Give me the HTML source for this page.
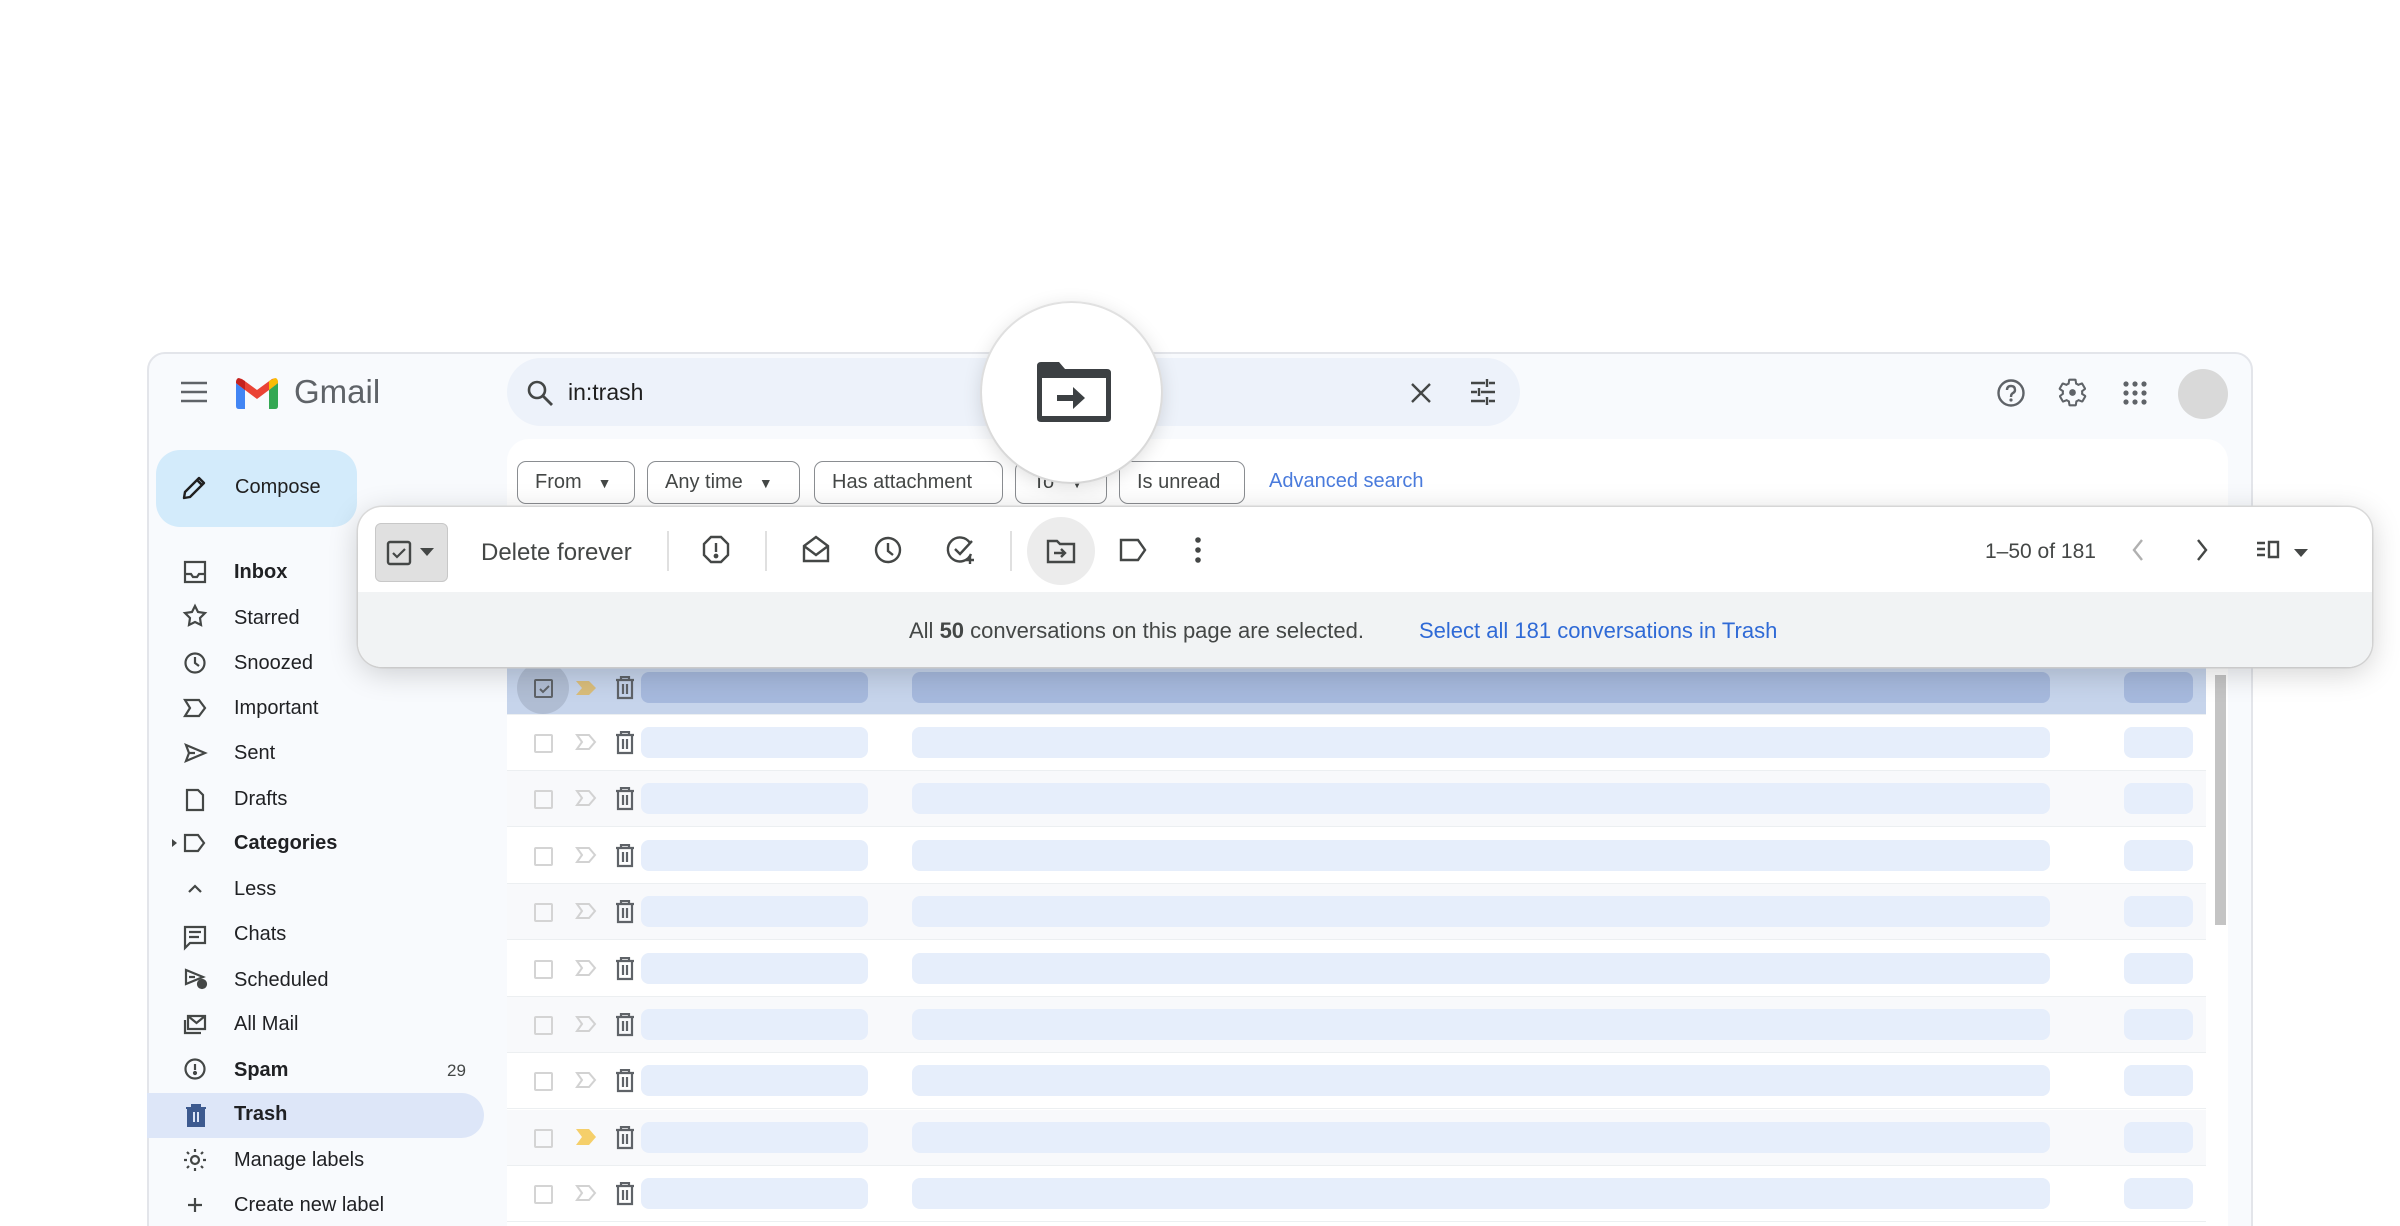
<!DOCTYPE html>
<html style="width:2400px;height:1226px;overflow:hidden"><head><meta charset="utf-8"><style>
*{margin:0;padding:0;box-sizing:border-box}
body{width:2400px;height:1226px;background:#fff;overflow:hidden;font-family:"Liberation Sans",Arial,sans-serif;color:#444746}
#clip{position:relative;width:2400px;height:1226px;overflow:hidden}
.abs{position:absolute}
.win{left:147px;top:352px;width:2106px;height:900px;background:#f8fafd;border:2px solid #e3e5ea;border-radius:18px}
.search{left:507px;top:358px;width:1013px;height:68px;background:#edf2fa;border-radius:34px}
.panel{left:507px;top:439px;width:1721px;height:820px;background:#fff;border-radius:22px}
.chip{top:461px;height:43px;border:1.5px solid #8a8d91;border-radius:9px;font-size:20px;color:#444746;display:flex;align-items:center;padding-left:17px}
.nav{left:234px;font-size:20px;color:#202124}
.row{left:507px;width:1699px;height:56px;border-bottom:1.5px solid #eceff1}
.b1,.b2,.b3{position:absolute;top:12px;height:31px;background:#e6eefb;border-radius:8px}
.b1{left:134px;width:227px}.b2{left:405px;width:1138px}.b3{left:1617px;width:69px}
.cb{position:absolute;left:27px;top:19px;width:19px;height:19px;border:2px solid #d4d4d4;border-radius:2px}
.imp{position:absolute;left:68px;top:18px}
.tr{position:absolute;left:108px;top:16px}
.card{left:358px;top:507px;width:2014px;height:160px;background:#fff;border-radius:24px;box-shadow:0 6px 30px rgba(0,0,0,.18),0 0 0 1.5px #e4e4e4;overflow:hidden}
.ti{position:absolute;top:27px}
</style></head><body><div id="clip">

<div class="abs win"></div>
<svg class="abs" style="left:180px;top:379px" width="28" height="26" viewBox="0 0 28 26"><path d="M1 4h26M1 13h26M1 22h26" stroke="#5f6368" stroke-width="2.6"/></svg>
<svg class="abs" style="left:236px;top:377px" width="42" height="32" viewBox="0 0 42 32"><path d="M0 6v23q0 3 3 3h6V13z" fill="#4285f4"/><path d="M42 6v23q0 3-3 3h-6V13z" fill="#34a853"/><path d="M0 6q0-6 6-4l15 11 15-11q6-2 6 4L33 13 21 22 9 13z" fill="#ea4335"/><path d="M33 4l6-3q3 0 3 5L33 13z" fill="#fbbc04"/><path d="M0 6q0-5 3-5l6 3v9z" fill="#c5221f"/></svg>
<div class="abs" style="left:294px;top:373px;font-size:33px;color:#5f6368">Gmail</div>
<div class="abs search"></div>
<svg class="abs" style="left:526px;top:379px" width="28" height="28" viewBox="0 0 28 28"><circle cx="11" cy="11" r="8" fill="none" stroke="#444746" stroke-width="2.6"/><path d="M17 17l9 9" stroke="#444746" stroke-width="2.8"/></svg>
<div class="abs" style="left:568px;top:379px;font-size:23px;color:#1f1f1f">in:trash</div>
<svg class="abs" style="left:1409px;top:381px" width="24" height="24"><path d="M3 3l18 18M21 3L3 21" stroke="#444746" stroke-width="2.4"/></svg>
<svg class="abs" style="left:1469px;top:378px" width="28" height="28"><path d="M2 5h14M20 5h6M18 1v8M2 14h6M12 14h14M10 10v8M2 23h14M20 23h6M18 19v8" stroke="#444746" stroke-width="2.4"/></svg>
<svg class="abs" style="left:1996px;top:378px" width="30" height="30"><circle cx="15" cy="15" r="12.5" fill="none" stroke="#5f6368" stroke-width="2.4"/><path d="M11 12q0-4 4-4t4 4q0 2-2 3t-2 4" fill="none" stroke="#5f6368" stroke-width="2.4"/><circle cx="15" cy="22" r="1.6" fill="#5f6368"/></svg>
<svg class="abs" style="left:2057px;top:377px" width="31" height="31" viewBox="0 0 24 24"><path fill="none" stroke="#5f6368" stroke-width="1.6" d="M19.4 13c0-.3.1-.6.1-1s0-.7-.1-1l2.1-1.6c.2-.2.2-.4.1-.6l-2-3.5c-.1-.2-.4-.3-.6-.2l-2.5 1c-.5-.4-1.1-.7-1.7-1l-.4-2.6c0-.2-.2-.4-.5-.4h-4c-.3 0-.5.2-.5.4l-.4 2.6c-.6.3-1.2.6-1.7 1l-2.5-1c-.2-.1-.5 0-.6.2l-2 3.5c-.1.2-.1.5.1.6L4.6 11c0 .3-.1.7-.1 1s0 .7.1 1l-2.1 1.6c-.2.2-.2.4-.1.6l2 3.5c.1.2.4.3.6.2l2.5-1c.5.4 1.1.7 1.700 1l.4 2.6c0 .2.2.4.5.4h4c.3 0 .5-.2.5-.4l.4-2.6c.6-.3 1.2-.6 1.7-1l2.5 1c.2.1.5 0 .6-.2l2-3.5c.1-.2.1-.5-.1-.6z"/><circle cx="12" cy="12" r="2.6" fill="#5f6368"/></svg>
<svg class="abs" style="left:2123px;top:381px" width="24" height="24"><g fill="#5f6368"><circle cx="3" cy="3" r="2.6"/><circle cx="12" cy="3" r="2.6"/><circle cx="21" cy="3" r="2.6"/><circle cx="3" cy="12" r="2.6"/><circle cx="12" cy="12" r="2.6"/><circle cx="21" cy="12" r="2.6"/><circle cx="3" cy="21" r="2.6"/><circle cx="12" cy="21" r="2.6"/><circle cx="21" cy="21" r="2.6"/></g></svg>
<div class="abs" style="left:2178px;top:369px;width:50px;height:50px;border-radius:50%;background:#d9d9d9"></div>

<div class="abs" style="left:156px;top:450px;width:201px;height:77px;background:#d3ebfb;border-radius:24px"></div>
<svg class="abs" style="left:180px;top:474px" width="28" height="28" viewBox="0 0 28 28"><path d="M4 24l1-6L19 4l5 5L10 23z M17 6l5 5" fill="none" stroke="#1f1f1f" stroke-width="2.4" stroke-linejoin="round"/></svg>
<div class="abs" style="left:235px;top:476px;font-size:20px;color:#1f1f1f">Compose</div>

<div class="abs" style="left:147px;top:1093px;width:337px;height:45px;background:#dde6f8;border-radius:0 23px 23px 0"></div>
<div class="abs nav" style="top:561px;font-weight:bold">Inbox</div>
<div class="abs nav" style="top:607px">Starred</div>
<div class="abs nav" style="top:652px">Snoozed</div>
<div class="abs nav" style="top:697px">Important</div>
<div class="abs nav" style="top:742px">Sent</div>
<div class="abs nav" style="top:788px">Drafts</div>
<div class="abs nav" style="top:832px;font-weight:bold">Categories</div>
<div class="abs nav" style="top:878px">Less</div>
<div class="abs nav" style="top:923px">Chats</div>
<div class="abs nav" style="top:969px">Scheduled</div>
<div class="abs nav" style="top:1013px">All Mail</div>
<div class="abs nav" style="top:1059px;font-weight:bold">Spam</div>
<div class="abs" style="left:447px;top:1061px;font-size:17px;color:#444746">29</div>
<div class="abs nav" style="top:1103px;font-weight:bold">Trash</div>
<div class="abs nav" style="top:1149px">Manage labels</div>
<div class="abs nav" style="top:1194px">Create new label</div>
<svg class="abs" style="left:165px;top:550px" width="50" height="676" fill="none" stroke="#444746" stroke-width="2.2">
<path d="M20 12h20v20H20zM20 24h6l2 3h4l2-3h6"/>
<path d="M30 56l3 6 7 1-5 5 1 7-6-3-6 3 1-7-5-5 7-1z"/>
<circle cx="30" cy="113" r="9.5"/><path d="M30 107v6l4 3"/>
<path d="M20 150h14l6 8-6 8H20l5-8z"/>
<path d="M21 195l19 8-19 8 3-8zM24 203h6"/>
<path d="M22 240h11l5 5v15H22z"/>
<path d="M7 289l5 4-5 4z" fill="#444746" stroke="none"/><path d="M20 285h13l6 8-6 8H20z"/>
<path d="M24 342l6-6 6 6"/>
<path d="M20 377h20v16H25l-5 5zM24 382h12M24 387h10"/>
<path d="M21 420l17 7-17 7zM24 427h6"/><circle cx="37" cy="434" r="4" fill="#444746"/>
<path d="M23 466h17v13H23zM23 466l8.5 7 8.5-7M20 470v13h16"/>
<circle cx="30" cy="519" r="9.5"/><path d="M30 514v6"/><circle cx="30" cy="523" r="1" fill="#444746"/>
<circle cx="30" cy="610" r="4"/><path d="M30 599v3M30 618v3M19 610h3M38 610h3M22 602l2 2M36 616l2 2M22 618l2-2M36 604l2-2"/>
<path d="M30 648v14M23 655h14"/>
</svg>
<svg class="abs" style="left:184px;top:1104px" width="24" height="24"><path d="M2 4h20M8 4V1h8v3M4 4v18h16V4z" fill="#3d5a8f" stroke="#3d5a8f" stroke-width="2"/><path d="M10 8v10M14 8v10" stroke="#dde6f8" stroke-width="2"/></svg>

<div class="abs panel"></div>
<div class="abs chip" style="left:517px;width:118px">From <span style="margin-left:16px;font-size:14px">▼</span></div>
<div class="abs chip" style="left:647px;width:153px">Any time <span style="margin-left:16px;font-size:14px">▼</span></div>
<div class="abs chip" style="left:814px;width:189px">Has attachment</div>
<div class="abs chip" style="left:1015px;width:92px">To <span style="margin-left:16px;font-size:14px">▼</span></div>
<div class="abs chip" style="left:1119px;width:126px">Is unread</div>
<div class="abs" style="left:1269px;top:470px;font-size:20px;color:#4a7bdc">Advanced search</div>

<div class="row abs" style="top:660px;height:55px;background:#c6d4eb"><div class="abs" style="left:10px;top:2px;width:52px;height:52px;border-radius:50%;background:#b0bdd3"></div><div class="cb" style="border-color:#5f6368"></div><svg class="abs" style="left:31px;top:24px" width="14" height="10"><path d="M2 5l3 3 6-6" stroke="#5f6368" stroke-width="2" fill="none"/></svg><svg class="imp" style="top:20px" width="22" height="16"><path d="M1 1h13l7 7-7 7H1l6-7z" fill="#d9bd7b"/></svg><svg class="tr" style="top:16px" width="20" height="24"><path d="M1 4h18M6 4V1h8v3M3 4v18h14V4M8 8v10M12 8v10" fill="none" stroke="#5f6368" stroke-width="2.2"/></svg><div class="b1" style="background:#a6b9dd"></div><div class="b2" style="background:#a6b9dd"></div><div class="b3" style="background:#a6b9dd"></div></div>
<div id="rows"></div>
<script>
var ys=[715,771,828,884,941,997,1053,1110,1166],h='';
for(var i=0;i<ys.length;i++){var y=ys[i];var alt=(i%2==1);var yel=(i==7);
h+='<div class="row abs" style="top:'+y+'px;background:'+(alt?'#f8f9fb':'#fff')+'"><div class="cb"></div><svg class="imp" width="22" height="18">'+(yel?'<path d="M1 1h13l7 8-7 8H1l6-8z" fill="#f5cf6a"/>':'<path d="M2 2h12l6 7-6 7H2l5-7z" fill="none" stroke="#d2d2d2" stroke-width="2"/>')+'</svg><svg class="tr" width="20" height="24"><path d="M1 4h18M6 4V1h8v3M3 4v18h14V4M8 8v10M12 8v10" fill="none" stroke="#5f6368" stroke-width="2.2"/></svg><div class="b1"></div><div class="b2"></div><div class="b3"></div></div>';}
document.getElementById('rows').innerHTML=h;
</script>
<div class="abs" style="left:2215px;top:675px;width:11px;height:250px;background:#c4c4c4"></div>

<div class="abs" style="left:982px;top:303px;width:179px;height:179px;border-radius:50%;background:#fff;box-shadow:0 4px 20px rgba(0,0,0,.15),0 0 0 2px #ececec"></div>
<svg class="abs" style="left:1037px;top:362px" width="74" height="60" viewBox="0 0 74 60"><path d="M0 4q0-4 4-4h18l6 7h42q4 0 4 4v45q0 4-4 4H4q-4 0-4-4z" fill="#3c4043"/><path d="M5 16h64v38H5z" fill="#fff"/><path d="M20 33h16v-8l12 11-12 11v-8H20z" fill="#3c4043"/></svg>

<div class="abs card">
 <div class="abs" style="left:0;top:85px;width:2014px;height:75px;background:#f1f3f4"></div>
 <div class="abs" style="left:17px;top:16px;width:73px;height:59px;background:#e0e0e0;border:1.5px solid #c8c8c8;border-radius:6px"></div>
 <svg class="abs" style="left:28px;top:33px" width="26" height="26"><rect x="2" y="2" width="22" height="22" rx="2" fill="none" stroke="#444746" stroke-width="2.4"/><path d="M7 13l4 4 8-8" fill="none" stroke="#444746" stroke-width="2.2"/></svg>
 <svg class="abs" style="left:62px;top:41px" width="14" height="9"><path d="M0 0h14L7 8z" fill="#444746"/></svg>
 <div class="abs" style="left:123px;top:32px;font-size:24px;color:#444746">Delete forever</div>
 <div class="abs" style="left:309px;top:24px;width:1.5px;height:40px;background:#e0e0e0"></div>
 <div class="abs" style="left:407px;top:24px;width:1.5px;height:40px;background:#e0e0e0"></div>
 <div class="abs" style="left:652px;top:24px;width:1.5px;height:40px;background:#e0e0e0"></div>
 <svg class="ti" style="left:344px" width="28" height="32" fill="none" stroke="#444746" stroke-width="2.4"><path d="M9 3h10l7 7v11l-7 7H9l-7-7V10z"/><path d="M14 9v9"/><circle cx="14" cy="22" r="1.2" fill="#444746"/></svg>
 <svg class="ti" style="left:443px" width="30" height="32" fill="none" stroke="#444746" stroke-width="2.4"><path d="M3 12l12-9 12 9v15H3zM3 12l12 9 12-9"/></svg>
 <svg class="ti" style="left:515px" width="30" height="32" fill="none" stroke="#444746" stroke-width="2.4"><circle cx="15" cy="16" r="12"/><path d="M15 9v8l5 4"/></svg>
 <svg class="ti" style="left:588px" width="32" height="32" fill="none" stroke="#444746" stroke-width="2.4"><path d="M24 9a12 12 0 1 0 1 11"/><path d="M9 15l5 5 12-13M24 22v8M20 26h8"/></svg>
 <div class="abs" style="left:669px;top:10px;width:68px;height:68px;border-radius:50%;background:#ececec"></div>
 <svg class="ti" style="left:688px;top:31px" width="30" height="26" viewBox="0 0 30 26" fill="none" stroke="#444746" stroke-width="2.4"><path d="M2 3h9l3 3h14v18H2z"/><path d="M8 15h11M15 11l4 4-4 4"/></svg>
 <svg class="ti" style="left:760px" width="30" height="32" fill="none" stroke="#444746" stroke-width="2.4"><path d="M3 6h17l7 10-7 10H3z"/></svg>
 <svg class="ti" style="left:834px" width="12" height="32"><g fill="#444746"><circle cx="6" cy="6" r="2.8"/><circle cx="6" cy="16" r="2.8"/><circle cx="6" cy="26" r="2.8"/></g></svg>
 <div class="abs" style="left:1627px;top:33px;font-size:21px;color:#444746">1–50 of 181</div>
 <svg class="ti" style="left:1772px" width="16" height="32"><path d="M12 6L4 16l8 10" fill="none" stroke="#b0b0b0" stroke-width="2.4"/></svg>
 <svg class="ti" style="left:1836px" width="16" height="32"><path d="M4 6l8 10-8 10" fill="none" stroke="#444746" stroke-width="2.4"/></svg>
 <svg class="ti" style="left:1897px" width="28" height="32" fill="none" stroke="#444746" stroke-width="2.4"><path d="M2 9h8M2 15h8M2 21h8M14 8h9v15h-9z"/></svg>
 <svg class="abs" style="left:1936px;top:42px" width="14" height="9"><path d="M0 0h14L7 8z" fill="#444746"/></svg>
 <div class="abs" style="left:551px;top:111px;font-size:22px;color:#444746">All <b>50</b> conversations on this page are selected.</div>
 <div class="abs" style="left:1061px;top:111px;font-size:22px;color:#2f6ad6">Select all 181 conversations in Trash</div>
</div>
</div></body></html>
